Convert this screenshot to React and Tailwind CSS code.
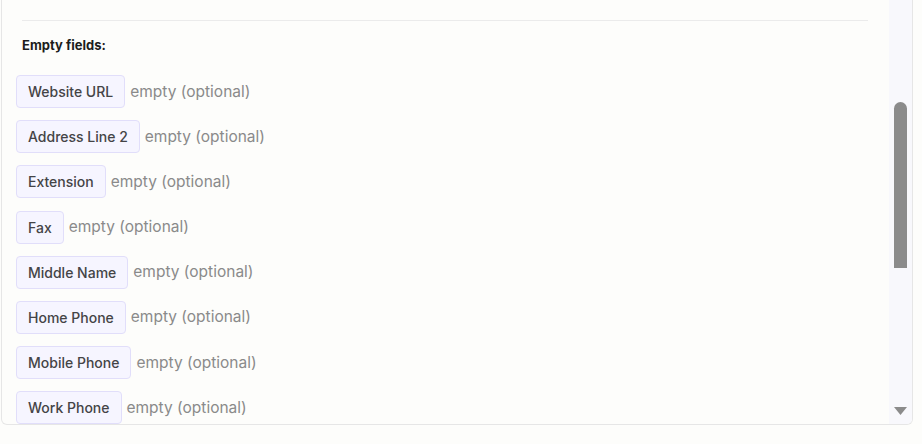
const EMPTY_FIELDS = [
  "Website URL",
  "Address Line 2",
  "Extension",
  "Fax",
  "Middle Name",
  "Home Phone",
  "Mobile Phone",
  "Work Phone",
]

function FieldRow({ label }) {
  return (
    <div className="flex items-center gap-[5px]">
      <span className="rounded-[4px] border border-[#e1defa] bg-[#f6f5ff] px-[11px] py-[6px] text-[14px] leading-[19px] font-medium text-[#444446]">
        {label}
      </span>
      <span className="text-[15.5px] leading-5 text-[#8a8a8a]">empty (optional)</span>
    </div>
  )
}

export default function App() {
  return (
    <div className="h-[444px] w-[922px] overflow-hidden bg-[#fdfdfb] font-['Inter',sans-serif]">
      <div className="ml-px flex h-[425px] w-[912px] overflow-hidden rounded-b-[6px] border-x border-b border-[#e6e6e6] bg-[#fdfdfb]">
        <div className="flex-1 overflow-hidden">
          <div className="mt-5 mr-[21px] ml-5 h-px bg-[#ebebeb]" />
          <h3 className="mt-[14px] pl-5 text-[13px] leading-5 font-bold text-[#1c1c1c]">Empty fields:</h3>
          <div className="mt-5 flex flex-col gap-[12.2px] pl-[14px]">
            {EMPTY_FIELDS.map((label) => (
              <FieldRow key={label} label={label} />
            ))}
          </div>
        </div>
        <div className="flex w-[23px] flex-col items-center bg-[#f8f8fc]">
          <div className="mt-[102px] h-[166px] w-[13px] rounded-t-full rounded-b-[6px] bg-[#8b8b8b]" />
          <div className="flex-1" />
          <svg width="13" height="8" viewBox="0 0 13 8" className="mr-px mb-[9px]">
            <path d="M0 0H13L6.5 8Z" fill="#8b8b8b" />
          </svg>
        </div>
      </div>
    </div>
  )
}
